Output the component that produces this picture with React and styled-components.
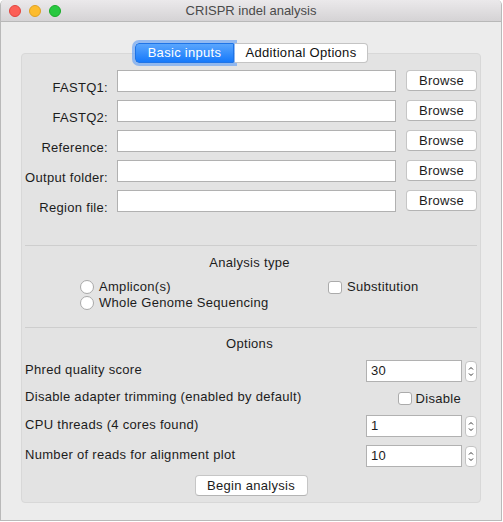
import React from 'react';
import styled, { createGlobalStyle } from 'styled-components';

const GlobalStyle = createGlobalStyle`
  html, body {
    margin: 0;
    padding: 0;
    background: #ffffff;
  }
  body {
    font-family: "Liberation Sans", Arial, sans-serif;
    font-size: 13px;
    letter-spacing: 0.3px;
    color: #1c1c1c;
  }
`;

const Window = styled.div`
  width: 502px;
  height: 521px;
  box-sizing: border-box;
  border: 1px solid #b9b9b9;
  border-top: none;
  border-radius: 5px 5px 0 0;
  background: #ececec;
  display: flex;
  flex-direction: column;
  overflow: hidden;
`;

const TitleBar = styled.div`
  height: 22px;
  box-sizing: border-box;
  background: linear-gradient(#ebe9eb, #d5d3d5);
  border-bottom: 1px solid #b8b8b8;
  display: flex;
  align-items: center;
  position: relative;
  padding-left: 8px;
  gap: 8px;
`;

const Light = styled.span`
  width: 12px;
  height: 12px;
  border-radius: 50%;
  box-sizing: border-box;
  background: ${p => p.$c};
  border: 1px solid ${p => p.$b};
`;

const Title = styled.div`
  position: absolute;
  left: 0;
  right: 0;
  top: 0;
  line-height: 22px;
  text-align: center;
  color: #4a4a4a;
  font-size: 13px;
  letter-spacing: 0;
`;

const Body = styled.div`
  flex: 1;
  padding: 21px 19px 0 20px;
  display: flex;
  flex-direction: column;
`;

const TabBar = styled.div`
  display: flex;
  justify-content: center;
  margin-bottom: -10px;
  position: relative;
  z-index: 1;
`;

const Tab = styled.div`
  height: 20px;
  box-sizing: border-box;
  line-height: 18px;
  font-size: 13px;
  text-align: center;
  white-space: nowrap;
  ${p => p.$active ? `
    width: 99px;
    color: #fff;
    background: linear-gradient(#5aa6fd, #1579fb);
    border: 1px solid #1f74e6;
    border-radius: 4px 0 0 4px;
    box-shadow: 0 0 0 3px rgba(100, 160, 245, 0.65);
  ` : `
    width: 133px;
    color: #111;
    background: #fff;
    border: 1px solid #c4c4c4;
    border-left: none;
    border-radius: 0 4px 4px 0;
    margin-left: 1px;
  `}
`;

const Pane = styled.div`
  width: 460px;
  height: 450px;
  box-sizing: border-box;
  background: #e3e3e3;
  border: 1px solid #d8d8d8;
  border-radius: 4px;
  padding: 16px 3px 0 2px;
  display: flex;
  flex-direction: column;
`;

const FileGrid = styled.div`
  display: grid;
  grid-template-columns: 84px 279px 71px;
  grid-auto-rows: 22px;
  column-gap: 9px;
  row-gap: 8px;
`;

const FieldLabel = styled.div`
  text-align: right;
  line-height: 16px;
  padding-top: 10px;
  white-space: nowrap;
  direction: rtl;
  unicode-bidi: plaintext;
`;

const TextBox = styled.div`
  box-sizing: border-box;
  height: 22px;
  background: #fff;
  border: 1px solid #b1b1b1;
  padding-left: 4px;
  line-height: 20px;
  font-size: 13px;
`;

const Button = styled.div`
  box-sizing: border-box;
  height: 21px;
  line-height: 19px;
  text-align: center;
  background: #fff;
  border: 1px solid #c6c6c6;
  border-bottom-color: #b4b4b4;
  border-radius: 4px;
  font-size: 13px;
  color: #1c1c1c;
  width: ${p => p.$w || 71}px;
  margin-left: ${p => p.$ml || 0}px;
`;

const Separator = styled.div`
  height: 1px;
  background: #cecece;
  margin: ${p => p.$top}px 0 0 1px;
`;

const SectionTitle = styled.div`
  text-align: center;
  line-height: 16px;
  margin-top: ${p => p.$top}px;
  padding-right: 2px;
`;

const TypeGrid = styled.div`
  display: grid;
  grid-template-columns: 248px auto;
  margin: 8px 0 0 56px;
`;

const Choice = styled.label`
  display: flex;
  align-items: center;
  gap: 5px;
  height: 16px;
  line-height: 16px;
  white-space: nowrap;
`;

const RadioDot = styled.span`
  width: 14px;
  height: 14px;
  box-sizing: border-box;
  border-radius: 50%;
  background: #fff;
  border: 1px solid #a9a9a9;
`;

const CheckBox = styled.span`
  width: 14px;
  height: 13px;
  box-sizing: border-box;
  border-radius: 3px;
  background: #fff;
  border: 1px solid #ababab;
`;

const OptionList = styled.div`
  display: flex;
  flex-direction: column;
  gap: 8px;
  margin-top: 8px;
  padding-left: 1px;
`;

const OptionRow = styled.div`
  display: flex;
  align-items: center;
  justify-content: space-between;
  height: ${p => p.$h || 22}px;
  line-height: 16px;
`;

const OptionLabel = styled.div`
  padding-bottom: ${p => p.$pb || 3}px;
  white-space: nowrap;
`;

const Spin = styled.div`
  display: flex;
  align-items: center;
  gap: 3px;
`;

const SpinBox = styled(TextBox)`
  width: 96px;
`;

const Stepper = styled.div`
  width: 12px;
  height: 21px;
  box-sizing: border-box;
  background: #fff;
  border: 1px solid #c3c3c3;
  border-radius: 4px;
  display: flex;
  align-items: center;
  justify-content: center;
`;

const DisableCheck = styled(Choice)`
  margin-right: 16px;
  gap: 4px;
`;

const Footer = styled.div`
  display: flex;
  justify-content: center;
  margin-top: 8px;
  padding-left: 1px;
`;

const Arrows = () => (
  <svg width="6" height="13" viewBox="0 0 6 13">
    <path d="M1 4.5 L3 2.5 L5 4.5" fill="none" stroke="#333" strokeWidth="1" />
    <path d="M1 8.5 L3 10.5 L5 8.5" fill="none" stroke="#333" strokeWidth="1" />
  </svg>
);

const files = ['FASTQ1:', 'FASTQ2:', 'Reference:', 'Output folder:', 'Region file:'];

const SpinField = ({ value }) => (
  <Spin>
    <SpinBox>{value}</SpinBox>
    <Stepper><Arrows /></Stepper>
  </Spin>
);

export default function App() {
  return (
    <>
      <GlobalStyle />
      <Window>
        <TitleBar>
          <Light $c="#fc5f57" $b="#e0443e" />
          <Light $c="#fdbc2e" $b="#dea123" />
          <Light $c="#28c840" $b="#1aab29" />
          <Title>CRISPR indel analysis</Title>
        </TitleBar>
        <Body>
          <TabBar>
            <Tab $active>Basic inputs</Tab>
            <Tab>Additional Options</Tab>
          </TabBar>
          <Pane>
            <FileGrid>
              {files.map(f => (
                <React.Fragment key={f}>
                  <FieldLabel>{f}</FieldLabel>
                  <TextBox />
                  <Button $ml={1}>Browse</Button>
                </React.Fragment>
              ))}
            </FileGrid>

            <Separator $top={33} />
            <SectionTitle $top={9}>Analysis type</SectionTitle>
            <TypeGrid>
              <Choice><RadioDot />Amplicon(s)</Choice>
              <Choice><CheckBox />Substitution</Choice>
              <Choice><RadioDot />Whole Genome Sequencing</Choice>
            </TypeGrid>

            <Separator $top={16} />
            <SectionTitle $top={8}>Options</SectionTitle>
            <OptionList>
              <OptionRow>
                <OptionLabel>Phred quality score</OptionLabel>
                <SpinField value="30" />
              </OptionRow>
              <OptionRow $h={17}>
                <OptionLabel $pb={0}>Disable adapter trimming (enabled by default)</OptionLabel>
                <DisableCheck><CheckBox />Disable</DisableCheck>
              </OptionRow>
              <OptionRow>
                <OptionLabel>CPU threads (4 cores found)</OptionLabel>
                <SpinField value="1" />
              </OptionRow>
              <OptionRow>
                <OptionLabel>Number of reads for alignment plot</OptionLabel>
                <SpinField value="10" />
              </OptionRow>
            </OptionList>
            <Footer>
              <Button $w={113}>Begin analysis</Button>
            </Footer>
          </Pane>
        </Body>
      </Window>
    </>
  );
}
